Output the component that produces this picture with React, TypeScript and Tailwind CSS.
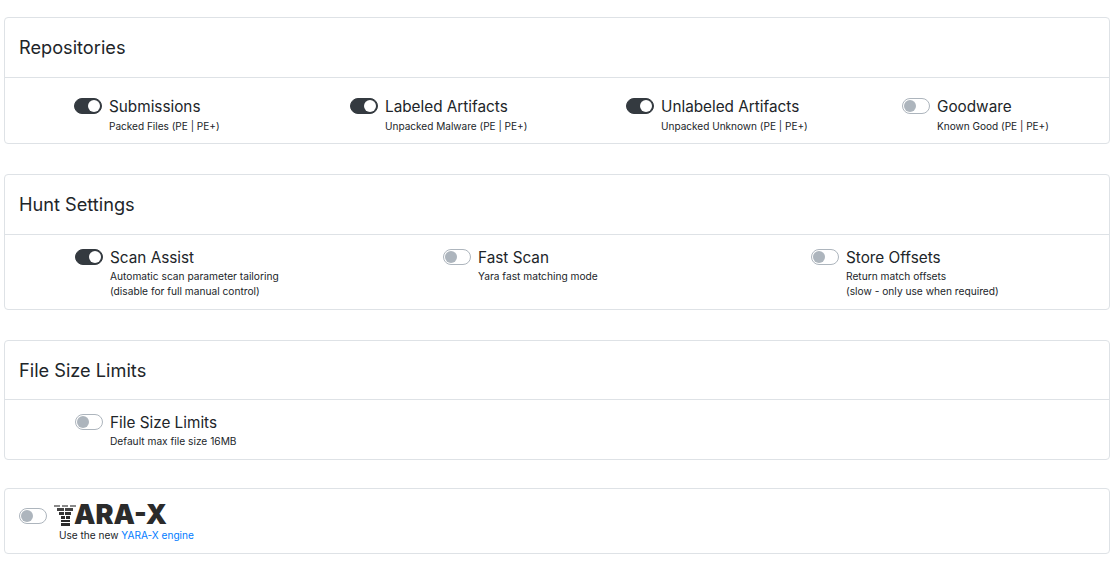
const Toggle = ({ on }: { on?: boolean }) => (
  <span
    className={`relative block w-[28px] h-[16px] shrink-0 rounded-full border ${
      on ? "bg-[#343a40] border-[#343a40]" : "bg-white border-[#adb5bd]"
    }`}
  >
    <span
      className={`absolute top-[1px] w-[12px] h-[12px] rounded-full ${
        on ? "left-[13px] bg-white" : "left-[1px] bg-[#adb5bd]"
      }`}
    />
  </span>
);

const Option = ({
  on,
  title,
  lines,
  tight,
}: {
  on?: boolean;
  title: string;
  lines: string[];
  tight?: boolean;
}) => (
  <div className="flex items-start gap-[7px]">
    <div className="pt-[4px]">
      <Toggle on={on} />
    </div>
    <div>
      <div className="pt-[1px] text-[15.3px] leading-[24px] text-[#212529]">{title}</div>
      <div
        className={`leading-[15px] text-[#212529] ${
          tight ? "text-[10.2px] -mt-[1px]" : "text-[10.05px] mt-0"
        }`}
      >
        {lines.map((l) => (
          <div key={l}>{l}</div>
        ))}
      </div>
    </div>
  </div>
);

const Card = ({
  title,
  short,
  children,
}: {
  title: string;
  short?: boolean;
  children: React.ReactNode;
}) => (
  <div className="border border-[#dee2e6] rounded-[4px] bg-white">
    <div
      className={`flex items-center px-[14px] border-b border-[#dee2e6] text-[18.2px] text-[#212529] ${
        short ? "h-[59px] pt-[1px]" : "h-[60px]"
      }`}
    >
      {title}
    </div>
    {children}
  </div>
);

export default function App() {
  return (
    <div className="bg-white min-h-[572px] pt-[17px] pl-[4px] pr-[7px] font-['Inter',sans-serif] flex flex-col">
      <Card title="Repositories">
        <div className="grid grid-cols-4 pt-[16px] pb-[9px]">
          <div className="pl-[69px]">
            <Option on title="Submissions" lines={["Packed Files (PE | PE+)"]} />
          </div>
          <div className="pl-[69px]">
            <Option on title="Labeled Artifacts" lines={["Unpacked Malware (PE | PE+)"]} />
          </div>
          <div className="pl-[69px]">
            <Option on title="Unlabeled Artifacts" lines={["Unpacked Unknown (PE | PE+)"]} />
          </div>
          <div className="pl-[69px]">
            <Option title="Goodware" lines={["Known Good (PE | PE+)"]} />
          </div>
        </div>
      </Card>

      <div className="mt-[30px]">
        <Card title="Hunt Settings">
          <div className="grid grid-cols-3 pt-[10px] pb-[10px]">
            <div className="pl-[70px]">
              <Option
                on
                tight
                title="Scan Assist"
                lines={["Automatic scan parameter tailoring", "(disable for full manual control)"]}
              />
            </div>
            <div className="pl-[70px]">
              <Option tight title="Fast Scan" lines={["Yara fast matching mode"]} />
            </div>
            <div className="pl-[70px]">
              <Option
                tight
                title="Store Offsets"
                lines={["Return match offsets", "(slow - only use when required)"]}
              />
            </div>
          </div>
        </Card>
      </div>

      <div className="mt-[30px]">
        <Card short title="File Size Limits">
          <div className="pt-[10px] pb-[10px] pl-[70px]">
            <Option tight title="File Size Limits" lines={["Default max file size 16MB"]} />
          </div>
        </Card>
      </div>

      <div className="mt-[28px] h-[66px] border border-[#dee2e6] rounded-[4px] flex items-start pl-[14px] pt-[19px] gap-[7px]">
        <div>
          <Toggle />
        </div>
        <div className="-mt-[5px]">
          <div className="flex items-center h-[24px]">
            <svg width="22" height="21" viewBox="0 0 22 21" className="shrink-0">
              <path d="M0 0h6v2H0zM8 0h6v2H8zM16 0h6v2h-6z" fill="#8a8a8a" />
              <path d="M3 3h7v3H3zM11 3h8v3h-8z" fill="#444" />
              <path d="M5 7h5v3H5zM11 7h6v3h-6z" fill="#333" />
              <path d="M7 11h4v3H7zM12 11h4v3h-4z" fill="#2b2b2b" />
              <path d="M7 15h9v2H7zM7 18h9v3H7z" fill="#2b2b2b" />
            </svg>
            <span className="text-[27px] leading-[24px] font-black text-[#2b2b2b] -ml-[2px]">
              ARA-X
            </span>
          </div>
          <div className="text-[10.1px] leading-[15px] mt-[1px] ml-[5px] text-[#212529]">
            Use the new <span className="text-[#007bff]">YARA-X engine</span>
          </div>
        </div>
      </div>
    </div>
  );
}
